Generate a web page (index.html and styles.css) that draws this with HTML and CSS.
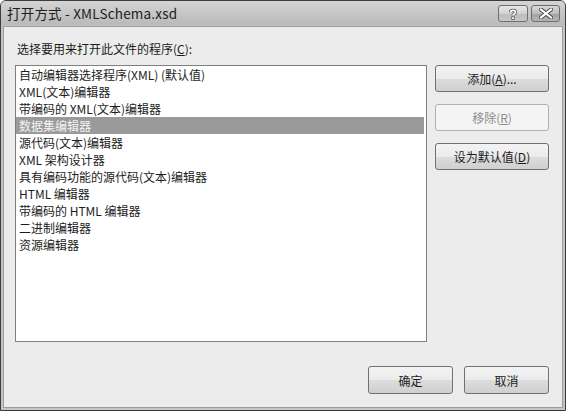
FILE: index.html
```html
<!DOCTYPE html>
<html lang="zh-CN">
<head>
    <meta charset="UTF-8">
    <title>打开方式 - XMLSchema.xsd</title>
    <link rel="stylesheet" href="styles.css">
</head>
<body>
    <div class="window">
        <div class="titlebar">
            <span class="title">打开方式 - XMLSchema.xsd</span>
            <div class="caption-buttons">
                <span class="cap-btn help">
                    <svg width="12" height="12" viewBox="0 0 12 12">
                        <path d="M3.5 4.2 C3.5 1.8 8.5 1.8 8.5 4.2 C8.5 6 6 6 6 7.6" fill="none" stroke="#555" stroke-width="3.2"/>
                        <path d="M3.5 4.2 C3.5 1.8 8.5 1.8 8.5 4.2 C8.5 6 6 6 6 7.6" fill="none" stroke="#fff" stroke-width="1.6"/>
                        <rect x="4.7" y="8.8" width="2.6" height="2.6" fill="#fff" stroke="#555" stroke-width="0.8"/>
                    </svg>
                </span>
                <span class="cap-btn close">
                    <svg width="14" height="11" viewBox="0 0 14 11">
                        <path d="M2 1.5 L12 9.5 M12 1.5 L2 9.5" stroke="#444" stroke-width="4" stroke-linecap="square"/>
                        <path d="M2 1.5 L12 9.5 M12 1.5 L2 9.5" stroke="#fff" stroke-width="2.2" stroke-linecap="square"/>
                    </svg>
                </span>
            </div>
        </div>
        <div class="client">
            <div class="prompt">选择要用来打开此文件的程序(<u>C</u>):</div>
            <div class="main-row">
                <ul class="program-list">
                    <li>自动编辑器选择程序(XML) (默认值)</li>
                    <li>XML(文本)编辑器</li>
                    <li>带编码的 XML(文本)编辑器</li>
                    <li class="selected">数据集编辑器</li>
                    <li>源代码(文本)编辑器</li>
                    <li>XML 架构设计器</li>
                    <li>具有编码功能的源代码(文本)编辑器</li>
                    <li>HTML 编辑器</li>
                    <li>带编码的 HTML 编辑器</li>
                    <li>二进制编辑器</li>
                    <li>资源编辑器</li>
                </ul>
                <div class="side-buttons">
                    <button class="btn wide">添加(<u>A</u>)...</button>
                    <button class="btn wide" disabled>移除(<u>R</u>)</button>
                    <button class="btn wide">设为默认值(<u>D</u>)</button>
                </div>
            </div>
            <div class="footer">
                <button class="btn">确定</button>
                <button class="btn">取消</button>
            </div>
        </div>
    </div>
</body>
</html>
```

FILE: styles.css
```css
body {
    margin: 0;
    font-family: "Noto Sans CJK SC", "Liberation Sans", sans-serif;
    font-size: 12px;
    color: #1c1c1c;
}
.window {
    width: 566px;
    height: 411px;
    box-sizing: border-box;
    border: 1px solid #3c3c3c;
    border-radius: 6px 6px 0 0;
    background: #c4c4c4;
    display: flex;
    flex-direction: column;
    overflow: hidden;
}
.titlebar {
    height: 24px;
    flex: none;
    display: flex;
    align-items: center;
    justify-content: space-between;
    padding: 0 5px 0 6px;
    background: linear-gradient(to bottom, #d4d4d4, #b9b9b9);
}
.title {
    font-size: 13.5px;
    letter-spacing: 0.2px;
    color: #202020;
}
.caption-buttons {
    display: flex;
    gap: 3px;
    margin-top: 1px;
}
.cap-btn {
    height: 15px;
    border: 1px solid #6e6e6e;
    border-radius: 3px;
    display: flex;
    align-items: center;
    justify-content: center;
    background: linear-gradient(to bottom, #e6e6e6 0%, #d2d2d2 50%, #bcbcbc 51%, #c8c8c8 100%);
}
.cap-btn.help {
    width: 28px;
}
.cap-btn.close {
    width: 27px;
    background: linear-gradient(to bottom, #d8d8d8 0%, #bdbdbd 50%, #a3a3a3 51%, #b4b4b4 100%);
}
.client {
    flex: 1;
    margin: 1px 2px 2px 2px;
    border: 1px solid #9c9c9c;
    background: #ececec;
    padding: 13px 13px 13px 11px;
    display: flex;
    flex-direction: column;
}
.prompt {
    line-height: 17px;
    margin: 0 0 8px 2px;
}
.main-row {
    display: flex;
    gap: 8px;
}
.program-list {
    list-style: none;
    margin: 0;
    padding: 0 2px 0 0;
    width: 409px;
    height: 275px;
    border: 1px solid #808080;
    background: #fff;
}
.program-list li {
    height: 17px;
    line-height: 17px;
    padding-left: 3px;
    white-space: nowrap;
}
.program-list li.selected {
    background: #9a9a9a;
    color: #f4f4f4;
}
.side-buttons {
    display: flex;
    flex-direction: column;
    gap: 12px;
}
.btn {
    width: 85px;
    height: 28px;
    border: 1px solid #707070;
    border-radius: 3px;
    font-family: inherit;
    font-size: 12px;
    color: #1c1c1c;
    padding: 0;
    background: linear-gradient(to bottom, #f3f3f3 0%, #ebebeb 50%, #dddddd 51%, #cfcfcf 100%);
}
.btn.wide {
    width: 114px;
    height: 27px;
}
.btn:disabled {
    border-color: #adb2b5;
    background: #f4f4f4;
    color: #8c8c8c;
}
.footer {
    margin-top: auto;
    display: flex;
    justify-content: flex-end;
    gap: 11px;
}
```
